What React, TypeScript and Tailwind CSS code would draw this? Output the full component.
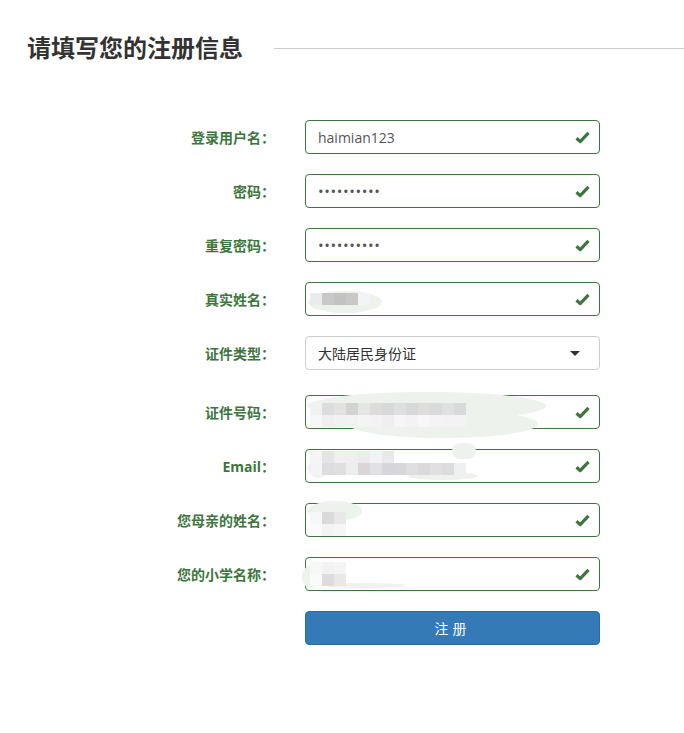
import React from 'react';

type Block = { x: number; y: number; c: string };

interface Field {
  label: string;
  value?: string;
  kind: 'text' | 'password' | 'mosaic' | 'select';
  mosaic?: Block[];
  blobs?: string[];
}

// pixelated (mosaic) blocks — 12px squares, coords relative to the input text area
const row = (y: number, x0: number, colors: string[]): Block[] =>
  colors.map((c, i) => ({ x: x0 + i * 12, y, c }));

const fields: Field[] = [
  { label: '登录用户名：', value: 'haimian123', kind: 'text' },
  { label: '密码：', value: '••••••••••', kind: 'password' },
  { label: '重复密码：', value: '••••••••••', kind: 'password' },
  {
    label: '真实姓名：',
    kind: 'mosaic',
    mosaic: row(10, -8, ['#ecebeb', '#c9c8c8', '#c3c2c3', '#c9c8c7', '#f3f4f6']),
    blobs: ['left-[-10px] top-[8px] w-[74px] h-[22px] rounded-[50%]'],
  },
  { label: '证件类型：', value: '大陆居民身份证', kind: 'select' },
  {
    label: '证件号码：',
    kind: 'mosaic',
    mosaic: [
      ...row(7, -8, ['#f1f1f1', '#dcdbdd', '#e3e1e1', '#d4d3d4', '#e6e5e6', '#dddbdb', '#d8d7dc', '#dfdee0', '#d8d7da', '#dedcdd', '#dad9dc', '#e0dfe1', '#d9d8dc']),
      ...row(19, -8, ['#f7f7f7', '#efefef', '#f1f1f1', '#f2f2f2', '#f4f4f4', '#f3f3f3', '#efefef', '#f6f6f6', '#f3f3f3', '#f7f7f7', '#f4f4f4', '#f3f3f3', '#f3f3f3']),
    ],
    blobs: [
      'left-[-10px] top-[-4px] w-[238px] h-[28px] rounded-[50%]',
      'left-[30px] top-[14px] w-[190px] h-[28px] rounded-[50%]',
    ],
  },
  {
    label: 'Email：',
    kind: 'mosaic',
    mosaic: [
      ...row(1, -8, ['#f5f5f5', '#e6e5e6', '#efefef', '#f0efef', '#edebeb', '#f1f4f7', '#e9e8ea']),
      ...row(13, -8, ['#f4f4f4', '#dddcde', '#e0dfe0', '#ededee', '#dad6d7', '#e1e1e3', '#d5d5da', '#d7d6da', '#dfdee0', '#dad9dc', '#e0dfe2', '#dcdbde', '#eff0f2']),
    ],
    blobs: [
      'left-[134px] top-[-7px] w-[24px] h-[16px] rounded-full',
      'left-[-10px] top-[8px] w-[20px] h-[20px] rounded-full',
      'left-[90px] top-[22px] w-[70px] h-[8px] rounded-[50%]',
    ],
  },
  {
    label: '您母亲的姓名：',
    kind: 'mosaic',
    mosaic: [
      ...row(8, -8, ['#f7f7f7', '#dadada', '#e8e8e8']),
      ...row(20, -8, ['#fafafa', '#f3f3f3', '#f6f6f6']),
    ],
    blobs: ['left-[-10px] top-[-3px] w-[54px] h-[20px] rounded-[50%]'],
  },
  {
    label: '您的小学名称：',
    kind: 'mosaic',
    mosaic: [
      ...row(4, -8, ['#f7f7f7', '#f2f2f2', '#f3f4f3']),
      ...row(16, -8, ['#fafafa', '#dcdcdc', '#e8e8e8']),
    ],
    blobs: [
      'left-[-16px] top-[8px] w-[16px] h-[22px] rounded-[50%]',
      'left-[8px] top-[25px] w-[80px] h-[5px] rounded-[50%]',
    ],
  },
];

function Check() {
  return (
    <svg width="15" height="13" viewBox="0 0 15 13" className="shrink-0">
      <path d="M1.5 7.2 L5.2 10.6 L13.5 1.8" fill="none" stroke="#3c763d" strokeWidth="3.2" strokeLinejoin="round" />
    </svg>
  );
}

function Control({ f }: { f: Field }) {
  if (f.kind === 'select') {
    return (
      <div className="w-[295px] h-[34px] flex items-center justify-between border border-[#cccccc] rounded-[4px] pl-3 pr-[19px] text-[14px] text-[#333333] bg-white">
        <span>{f.value}</span>
        <span className="w-0 h-0 border-l-[5px] border-r-[5px] border-t-[5px] border-l-transparent border-r-transparent border-t-[#333333]" />
      </div>
    );
  }
  return (
    <div className="relative w-[295px] h-[34px] flex items-center justify-between border border-[#3c763d] rounded-[4px] pl-3 pr-[9px] text-[14px] text-[#555555] bg-white">
      {f.kind === 'mosaic' ? (
        <div className="relative h-full flex-1">
          {f.blobs?.map((b, i) => (
            <span key={i} className={`absolute bg-[#edf2ec] ${b}`} />
          ))}
          {f.mosaic?.map((m, i) => (
            <span
              key={i}
              className="absolute w-[12px] h-[12px]"
              style={{ left: m.x, top: m.y, backgroundColor: m.c }}
            />
          ))}
        </div>
      ) : (
        <span className={f.kind === 'password' ? 'text-[15px] tracking-[0.6px] text-[#555555]' : ''}>{f.value}</span>
      )}
      <Check />
    </div>
  );
}

export default function App() {
  return (
    <div className="w-[684px] h-[733px] bg-white overflow-hidden font-['Open_Sans','Noto_Sans_CJK_SC',sans-serif]">
      {/* Title */}
      <div className="flex items-center pt-[31px] pl-[27px]">
        <h2 className="text-[24px] font-bold text-[#333333] leading-[32px] font-['Noto_Sans_CJK_SC',sans-serif] whitespace-nowrap">
          请填写您的注册信息
        </h2>
        <div className="flex-1 ml-[31px] h-px bg-[#cccccc] mt-[2px]" />
      </div>

      {/* Form */}
      <div className="flex flex-col pt-[57px]">
        {fields.map((f) => (
          <div
            key={f.label}
            className={`flex items-center ${f.kind === 'select' ? 'mb-[25px]' : 'mb-[20px]'}`}
          >
            <label className="w-[275px] text-right text-[14px] font-bold text-[#3c763d] font-['Noto_Sans_CJK_SC',sans-serif]">
              {f.label === 'Email：' ? (
                <>
                  <span className="font-['Open_Sans',sans-serif]">Email</span>：
                </>
              ) : (
                f.label
              )}
            </label>
            <div className="ml-[30px]">
              <Control f={f} />
            </div>
          </div>
        ))}

        <div className="flex">
          <button className="ml-[305px] w-[295px] h-[34px] rounded-[4px] bg-[#337ab7] border border-[#2e6da4] text-white text-[14px] tracking-[4px] font-['Noto_Sans_CJK_SC',sans-serif]">
            注册
          </button>
        </div>
      </div>
    </div>
  );
}
